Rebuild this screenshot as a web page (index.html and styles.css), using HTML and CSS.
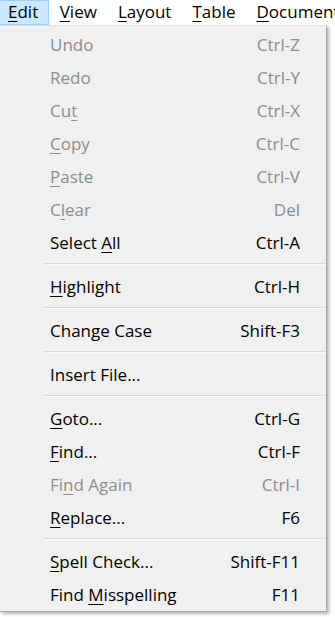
FILE: index.html
```html
<!DOCTYPE html>
<html lang="en">
<head>
  <meta charset="UTF-8" />
  <title>Edit menu</title>
  <link rel="stylesheet" href="styles.css">
</head>
<body>
  <div class="menubar">
    <span class="top active"><u>E</u>dit</span>
    <span class="top"><u>V</u>iew</span>
    <span class="top"><u>L</u>ayout</span>
    <span class="top"><u>T</u>able</span>
    <span class="top"><u>D</u>ocument</span>
  </div>

  <div class="menu">
    <div class="item off"><span>Undo</span><span>Ctrl-Z</span></div>
    <div class="item off"><span>Redo</span><span>Ctrl-Y</span></div>
    <div class="item off"><span>Cu<u>t</u></span><span>Ctrl-X</span></div>
    <div class="item off"><span><u>C</u>opy</span><span>Ctrl-C</span></div>
    <div class="item off"><span><u>P</u>aste</span><span>Ctrl-V</span></div>
    <div class="item off"><span>C<u>l</u>ear</span><span>Del</span></div>
    <div class="item"><span>Select <u>A</u>ll</span><span>Ctrl-A</span></div>
    <div class="sep"></div>
    <div class="item"><span><u>H</u>ighlight</span><span>Ctrl-H</span></div>
    <div class="sep"></div>
    <div class="item"><span>Change Case</span><span>Shift-F3</span></div>
    <div class="sep"></div>
    <div class="item"><span>Insert File...</span><span></span></div>
    <div class="sep"></div>
    <div class="item"><span><u>G</u>oto...</span><span>Ctrl-G</span></div>
    <div class="item"><span><u>F</u>ind...</span><span>Ctrl-F</span></div>
    <div class="item off"><span>Fi<u>n</u>d Again</span><span>Ctrl-I</span></div>
    <div class="item"><span><u>R</u>eplace...</span><span>F6</span></div>
    <div class="sep"></div>
    <div class="item"><span><u>S</u>pell Check...</span><span>Shift-F11</span></div>
    <div class="item"><span>Find <u>M</u>isspelling</span><span>F11</span></div>
  </div>
</body>
</html>
```

FILE: styles.css
```css
body {
  margin: 0;
  background: #fff;
  font-family: "Open Sans", "Noto Sans", sans-serif;
  font-size: 17px;
  color: #000;
  width: 335px;
  height: 617px;
  overflow: hidden;
}
u {
  text-decoration-thickness: 1px;
  text-underline-offset: 3px;
}
.menubar {
  display: flex;
  height: 25px;
  white-space: nowrap;
  overflow: hidden;
}
.top {
  padding: 0 10.5px;
  line-height: 24px;
}
.top.active {
  background: #cce8ff;
  border: 1px solid #99d1ff;
  border-left: none;
  line-height: 22px;
  padding: 0 10px 0 8px;
}
.menu {
  width: 326px;
  background: #f0f0f0;
  border-top: 1px solid #e0e0e0;
  border-right: 1px solid #a8a8a8;
  border-bottom: 1px solid #a8a8a8;
  padding: 2px 0 0;
  box-shadow: 2px 2px 3px rgba(0,0,0,0.3);
}
.item {
  display: flex;
  justify-content: space-between;
  height: 33px;
  line-height: 33px;
  padding: 0 26px 0 50px;
}
.item.off {
  color: #8d8d8d;
}
.sep {
  height: 1px;
  background: #d7d7d7;
  margin: 4px 0 5px 44px;
  border-bottom: 1px solid #fafafa;
}
```
